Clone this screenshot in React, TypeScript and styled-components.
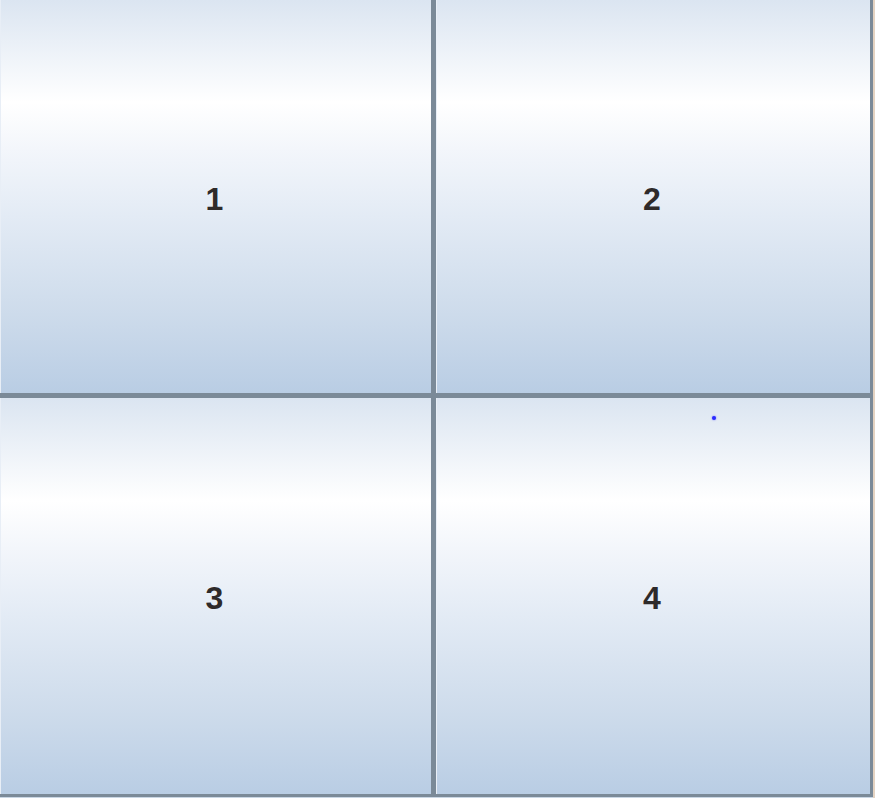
import styled, { createGlobalStyle } from 'styled-components'

const GlobalStyle = createGlobalStyle`
  html, body {
    margin: 0;
    padding: 0;
    background: #e4d3c2;
  }
  body {
    font-family: "Liberation Sans", Arial, sans-serif;
  }
`

const Frame = styled.div`
  display: grid;
  grid-template-columns: 431px 434px;
  grid-template-rows: 393px 396px;
  gap: 5px;
  width: 870px;
  height: 794px;
  padding: 0 3px 3px 0;
  background: #7b8a98;
  border-bottom: 1px solid #c9d6e4;
`

const Cell = styled.div`
  position: relative;
  display: flex;
  align-items: center;
  justify-content: center;
  background: linear-gradient(
    to bottom,
    #dbe5f1 0%,
    #ffffff 26%,
    #f3f6fb 38%,
    #e3ebf5 55%,
    #cddbeb 80%,
    #b9cde4 100%
  );
  border-left: 1px solid #e8eef6;
`

const Label = styled.span`
  font-size: 32px;
  font-weight: bold;
  color: #2e2a2a;
  line-height: 1;
  margin-top: 4px;
  margin-right: 3px;
`

const Dot = styled.span`
  position: absolute;
  left: 275px;
  top: 18px;
  width: 4px;
  height: 4px;
  border-radius: 50%;
  background: #2a2aff;
  box-shadow: 0 0 2px #6a6aff;
`

const cells = ['1', '2', '3', '4']

export default function App() {
  return (
    <>
      <GlobalStyle />
      <Frame>
        {cells.map((c) => (
          <Cell key={c}>
            <Label>{c}</Label>
            {c === '4' && <Dot />}
          </Cell>
        ))}
      </Frame>
    </>
  )
}
